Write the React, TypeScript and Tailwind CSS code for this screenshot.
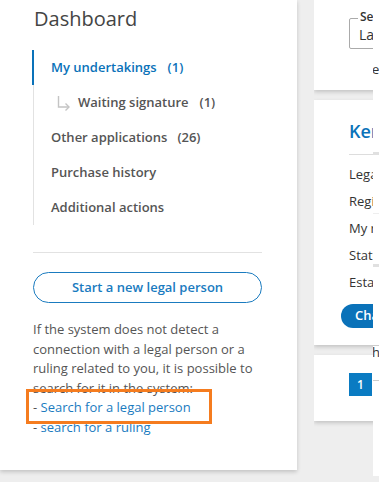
import React from "react";

const font = { fontFamily: '"Open Sans", "Noto Sans", sans-serif' };

function Arrow() {
  return (
    <svg width="14" height="16" viewBox="0 0 14 16" className="mr-[7px] shrink-0" fill="none" stroke="#c4c4c4" strokeWidth="1.4">
      <path d="M1.5 1 V12 H12" />
      <path d="M8.5 8.5 L12 12 L8.5 15.5" />
    </svg>
  );
}

export default function App() {
  return (
    <div className="w-[379px] h-[482px] bg-[#eeeeee] overflow-hidden flex items-start" style={font}>
      {/* Left card */}
      <div className="relative w-[297px] h-[470px] shrink-0 bg-white shadow-[0_2px_4px_rgba(0,0,0,0.18)] pl-[33px] pr-[35px] pt-[5px]">
        <div className="text-[20px] leading-[28px] text-[#444] pl-[1px]">Dashboard</div>
        <div className="mt-[17px] flex flex-col text-[13px] font-semibold text-[#555]">
          <div className="h-[35px] flex items-center pl-[17px] border-l-2 border-[#0a72b9] -ml-[1px] text-[#0a72b9]">
            <span>My undertakings</span>
            <span className="ml-[11px]">(1)</span>
          </div>
          <div className="h-[35px] flex items-center pl-[23px] border-l border-[#e2e2e2]">
            <Arrow />
            <span>Waiting signature</span>
            <span className="ml-[11px]">(1)</span>
          </div>
          <div className="h-[35px] flex items-center pl-[17px] border-l border-[#e2e2e2]">
            <span>Other applications</span>
            <span className="ml-[10px]">(26)</span>
          </div>
          <div className="h-[35px] flex items-center pl-[17px] border-l border-[#e2e2e2]">
            <span>Purchase history</span>
          </div>
          <div className="h-[35px] flex items-center pl-[17px] border-l border-[#e2e2e2]">
            <span>Additional actions</span>
          </div>
        </div>
        <div className="mt-[27px] border-t border-[#e2e2e2]" />
        <button className="mt-[19px] w-full h-[31px] rounded-full border border-[#1a7bbf] text-[#1a7bbf] text-[13px] font-semibold flex items-center justify-center">
          Start a new legal person
        </button>
        <p className="mt-[17px] text-[13px] leading-[19.5px] text-[#555]">
          If the system does not detect a connection with a legal person or a ruling related to you, it is possible to search for it in the system:
          <br />
          - <span className="text-[#1a7bbf]">Search for a legal person</span>
          <br />
          - <span className="text-[#1a7bbf]">search for a ruling</span>
        </p>
        <div className="absolute left-[26px] top-[389px] w-[186px] h-[35px] border-[3px] border-[#f57c1f]" />
      </div>

      {/* Right column (clipped) */}
      <div className="ml-[17px] w-[59px] h-[482px] shrink-0 overflow-hidden">
        <div className="w-[300px] flex flex-col gap-[10px] -mt-[10px]">
          <div className="h-[100px] bg-white shadow-[0_2px_4px_rgba(0,0,0,0.18)] pt-[28px] pl-[35px]">
            <div className="relative w-[200px] h-[31px] border border-[#aaa] rounded-[2px]">
              <span className="absolute -top-[10px] left-[8px] bg-white px-[2px] text-[12px] font-semibold text-[#333] leading-[16px]">Select</span>
              <span className="absolute top-[7px] left-[9px] text-[14px] leading-[18px] text-[#333]">Language</span>
            </div>
          </div>
          <div className="h-[245px] bg-white shadow-[0_2px_4px_rgba(0,0,0,0.18)] pl-[35px] pr-[20px] pt-[19px]">
            <div className="text-[18px] leading-[24px] text-[#0a72b9] font-semibold">Kernel Ltd</div>
            <div className="mt-[11px] border-t border-[#ddd]" />
            <div className="mt-[6px] flex flex-col text-[13px] text-[#333]">
              <div className="h-[27px] flex items-center">Legal form</div>
              <div className="h-[27px] flex items-center">Registry code</div>
              <div className="h-[27px] flex items-center">My role</div>
              <div className="h-[27px] flex items-center">Status</div>
              <div className="h-[27px] flex items-center">Established</div>
            </div>
            <button className="mt-[8px] -ml-[8px] h-[24px] px-[14px] rounded-full bg-[#0a72b9] text-white text-[13px] font-semibold flex items-center">
              Change
            </button>
          </div>
          <div className="h-[66px] bg-white shadow-[0_2px_4px_rgba(0,0,0,0.18)] pl-[35px] pt-[18px]">
            <div className="w-[23px] h-[23px] bg-[#0a7bc2] text-white text-[12px] font-semibold flex items-center justify-center">1</div>
          </div>
        </div>
      </div>

      {/* Right edge strip */}
      <div className="w-[6px] h-[476px] shrink-0 bg-white relative overflow-hidden">
        <span className="absolute top-[60px] -left-[1px] text-[13px] leading-[18px] text-[#333]">e</span>
        <div className="absolute top-[152px] left-0 w-full h-[3px] bg-[#e0e0e0]" />
        <div className="absolute top-[213px] left-0 w-full h-[1px] bg-[#eee]" />
        <div className="absolute top-[264px] left-0 w-full h-[3px] bg-[#e0e0e0]" />
        <div className="absolute top-[345px] left-0 w-full h-[1px] bg-[#ccc]" />
        <span className="absolute top-[343px] -left-[1px] text-[13px] leading-[18px] text-[#333]">h</span>
        <div className="absolute top-[380px] left-0 w-full h-[1px] bg-[#ccc]" />
      </div>
    </div>
  );
}
